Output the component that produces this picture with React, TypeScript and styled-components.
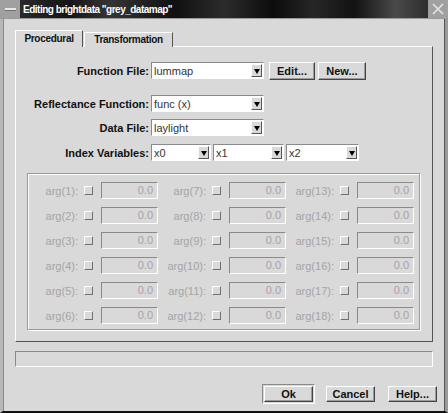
import { FC } from "react";
import styled, { createGlobalStyle, css } from "styled-components";

const GlobalStyle = createGlobalStyle`
  html, body {
    margin: 0;
    padding: 0;
    background: #d9d9d9;
  }
  body {
    font-family: "Liberation Sans", Arial, sans-serif;
    font-size: 11px;
  }
`;

const raised = css`
  border-top: 1px solid #ffffff;
  border-left: 1px solid #ffffff;
  border-right: 1px solid #8a8a8a;
  border-bottom: 1px solid #8a8a8a;
`;

const sunken = css`
  border-top: 1px solid #8a8a8a;
  border-left: 1px solid #8a8a8a;
  border-right: 1px solid #ffffff;
  border-bottom: 1px solid #ffffff;
`;

const Window = styled.div`
  width: 448px;
  height: 413px;
  box-sizing: border-box;
  background: #d9d9d9;
  display: flex;
  flex-direction: column;
  border-left: 3px solid #b8b8b8;
  border-right: 3px solid #9a9a9a;
  border-bottom: 2px solid #111;
  box-shadow: inset 1px 0 0 #8a8a8a, inset -1px 0 0 #555;
`;

const TitleBar = styled.div`
  height: 18px;
  display: flex;
  margin: 0 -3px;
  background: #a8a8a8;
  border-bottom: 1px solid #9a9a9a;
`;

const MenuBox = styled.div`
  width: 20px;
  display: flex;
  align-items: center;
  justify-content: center;
  background: #a0a0a0;

  &::before {
    content: "";
    width: 11px;
    height: 2px;
    background: #e8e8e8;
    border-bottom: 1px solid #707070;
  }
`;

const TitleText = styled.div`
  flex: 1;
  display: flex;
  align-items: center;
  padding-left: 3px;
  color: #ffffff;
  font-weight: bold;
  font-size: 10px;
  letter-spacing: -0.5px;
  background: linear-gradient(
    90deg,
    #2a2a2a 0%,
    #151515 12%,
    #353535 22%,
    #101010 38%,
    #2c2c2c 50%,
    #0c0c0c 62%,
    #262626 72%,
    #121212 82%,
    #4a4a4a 92%,
    #2e2e2e 100%
  );
`;

const CloseBox = styled.div`
  width: 20px;
  display: flex;
  align-items: center;
  justify-content: center;
  background: #a0a0a0;
`;

const Body = styled.div`
  flex: 1;
  display: flex;
  flex-direction: column;
  padding: 11px 12px 0 12px;
`;

const TabRow = styled.div`
  display: flex;
  align-items: flex-end;
  height: 17px;
  position: relative;
  z-index: 1;
`;

const Tab = styled.div<{ $active?: boolean; $width: number }>`
  ${raised};
  border-bottom: none;
  border-right: 1px solid #555;
  box-sizing: border-box;
  width: ${(p) => p.$width}px;
  font-weight: bold;
  font-size: 10px;
  letter-spacing: -0.3px;
  color: #111;
  display: flex;
  align-items: center;
  justify-content: center;
  background: #d9d9d9;
  height: ${(p) => (p.$active ? "17px" : "15px")};
  padding-bottom: ${(p) => (p.$active ? "2px" : "1px")};
  margin-left: ${(p) => (p.$active ? "0" : "1px")};
`;

const Panel = styled.div`
  ${raised};
  border-right: 1px solid #555;
  border-bottom: 1px solid #555;
  height: 296px;
  box-sizing: border-box;
  margin-top: -1px;
  display: flex;
  flex-direction: column;
  padding: 15px 12px 11px 11px;
`;

const FormRow = styled.div<{ $gap: number }>`
  display: flex;
  align-items: center;
  height: 17px;
  margin-bottom: ${(p) => p.$gap}px;
`;

const Label = styled.div`
  width: 122px;
  text-align: right;
  font-weight: bold;
  color: #111;
  padding-right: 2px;
  white-space: nowrap;
`;

const Combo = styled.div<{ $width: number }>`
  ${sunken};
  width: ${(p) => p.$width}px;
  height: 17px;
  box-sizing: border-box;
  background: #ffffff;
  display: flex;
  align-items: center;
  margin-right: 2px;
`;

const ComboText = styled.div`
  flex: 1;
  padding-left: 2px;
  color: #333;
  white-space: nowrap;
  overflow: hidden;
`;

const ArrowButton = styled.div`
  ${raised};
  border-right-color: #555;
  border-bottom-color: #555;
  width: 11px;
  height: 13px;
  box-sizing: border-box;
  margin-right: 1px;
  background: #d9d9d9;
  display: flex;
  align-items: center;
  justify-content: center;

  &::before {
    content: "";
    border-left: 3px solid transparent;
    border-right: 3px solid transparent;
    border-top: 5px solid #000;
    margin-top: 1px;
  }
`;

const PushButton = styled.div<{ $width: number }>`
  ${raised};
  border-right-color: #444;
  border-bottom-color: #444;
  box-shadow: inset -1px -1px 0 #9a9a9a;
  width: ${(p) => p.$width}px;
  height: 18px;
  box-sizing: border-box;
  display: flex;
  align-items: center;
  justify-content: center;
  font-weight: bold;
  color: #111;
  margin-left: 3px;
`;

const GroupBox = styled.div`
  margin-top: 12px;
  flex: 1;
  border: 1px solid #9a9a9a;
  box-shadow: inset 1px 1px 0 #ffffff, 1px 1px 0 #ffffff;
  display: grid;
  grid-template-columns: repeat(3, 127px);
  column-gap: 1px;
  row-gap: 8px;
  align-content: start;
  padding: 8px 0 0 3px;
`;

const ArgCell = styled.div`
  display: flex;
  align-items: center;
  height: 17px;
`;

const ArgLabel = styled.div`
  width: 47px;
  text-align: right;
  color: #a4a4a4;
  white-space: nowrap;
  margin-right: 6px;
`;

const CheckBox = styled.div`
  ${raised};
  border-right-color: #707070;
  border-bottom-color: #707070;
  width: 9px;
  height: 9px;
  box-sizing: border-box;
  background: #d9d9d9;
  margin-right: 8px;
`;

const ArgField = styled.div`
  ${sunken};
  width: 57px;
  height: 17px;
  box-sizing: border-box;
  text-align: right;
  padding-right: 4px;
  line-height: 15px;
  color: #a4a4a4;
`;

const StatusBar = styled.div`
  ${sunken};
  height: 16px;
  box-sizing: border-box;
  margin-top: 9px;
`;

const ButtonRow = styled.div`
  display: flex;
  justify-content: flex-end;
  align-items: center;
  margin-top: 17px;
  margin-right: -4px;
`;

const DefaultFrame = styled.div`
  ${sunken};
  padding: 1px;
  display: flex;
`;

const DialogButton = styled.div<{ $width: number }>`
  ${raised};
  border-right-color: #444;
  border-bottom-color: #444;
  box-shadow: inset -1px -1px 0 #9a9a9a;
  width: ${(p) => p.$width}px;
  height: 16px;
  box-sizing: border-box;
  display: flex;
  align-items: center;
  justify-content: center;
  font-weight: bold;
  color: #111;
`;

const ButtonGap = styled.div<{ $width: number }>`
  width: ${(p) => p.$width}px;
`;

const argColumns = [0, 6, 12];

const App: FC = () => {
  const rows = [0, 1, 2, 3, 4, 5];
  return (
    <>
      <GlobalStyle />
      <Window>
        <TitleBar>
          <MenuBox />
          <TitleText>Editing brightdata "grey_datamap"</TitleText>
          <CloseBox>
            <svg width="12" height="12" viewBox="0 0 12 12">
              <path d="M1 1 L11 11 M11 1 L1 11" stroke="#e6e6e6" strokeWidth="1.6" />
            </svg>
          </CloseBox>
        </TitleBar>
        <Body>
          <TabRow>
            <Tab $active $width={68}>Procedural</Tab>
            <Tab $width={89}>Transformation</Tab>
          </TabRow>
          <Panel>
            <FormRow $gap={16}>
              <Label>Function File:</Label>
              <Combo $width={113}>
                <ComboText>lummap</ComboText>
                <ArrowButton />
              </Combo>
              <PushButton $width={46}>Edit...</PushButton>
              <PushButton $width={48}>New...</PushButton>
            </FormRow>
            <FormRow $gap={7}>
              <Label>Reflectance Function:</Label>
              <Combo $width={113}>
                <ComboText>func (x)</ComboText>
                <ArrowButton />
              </Combo>
            </FormRow>
            <FormRow $gap={8}>
              <Label>Data File:</Label>
              <Combo $width={113}>
                <ComboText>laylight</ComboText>
                <ArrowButton />
              </Combo>
            </FormRow>
            <FormRow $gap={0}>
              <Label>Index Variables:</Label>
              <Combo $width={60}>
                <ComboText>x0</ComboText>
                <ArrowButton />
              </Combo>
              <Combo $width={71}>
                <ComboText>x1</ComboText>
                <ArrowButton />
              </Combo>
              <Combo $width={73}>
                <ComboText>x2</ComboText>
                <ArrowButton />
              </Combo>
            </FormRow>
            <GroupBox>
              {rows.map((r) =>
                argColumns.map((c) => (
                  <ArgCell key={`${r}-${c}`}>
                    <ArgLabel>{`arg(${c + r + 1}):`}</ArgLabel>
                    <CheckBox />
                    <ArgField>0.0</ArgField>
                  </ArgCell>
                ))
              )}
            </GroupBox>
          </Panel>
          <StatusBar />
          <ButtonRow>
            <DefaultFrame>
              <DialogButton $width={49}>Ok</DialogButton>
            </DefaultFrame>
            <ButtonGap $width={11} />
            <DialogButton $width={49}>Cancel</DialogButton>
            <ButtonGap $width={13} />
            <DialogButton $width={49}>Help...</DialogButton>
          </ButtonRow>
        </Body>
      </Window>
    </>
  );
};

export default App;
